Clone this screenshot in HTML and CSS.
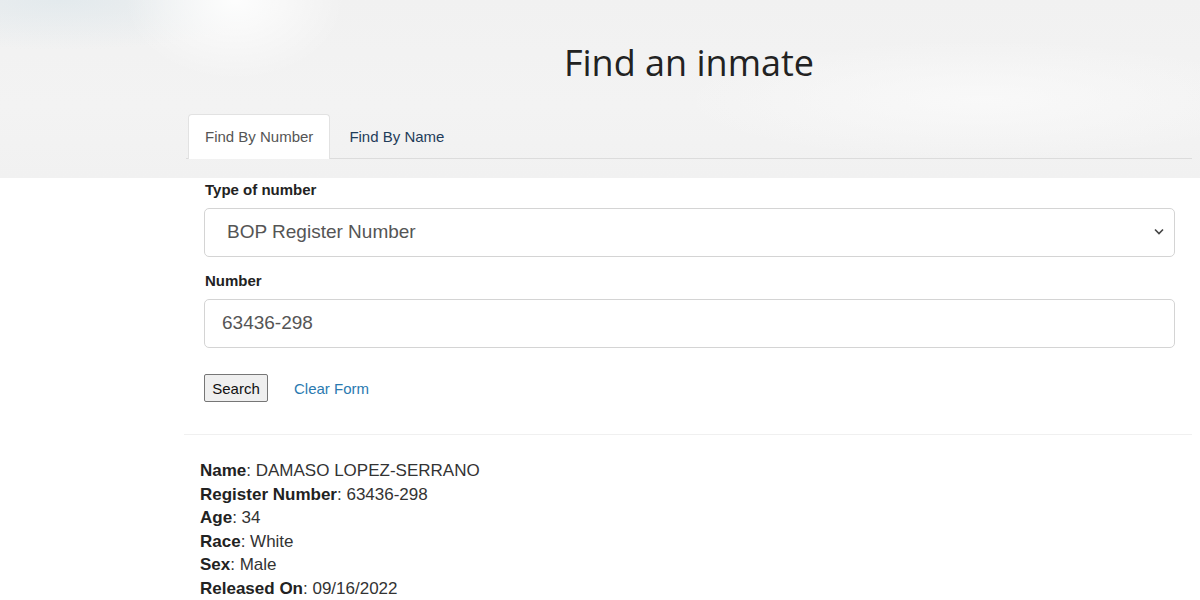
FILE: index.html
```html
<!DOCTYPE html>
<html lang="en">
<head>
<meta charset="utf-8">
<title>Find an inmate</title>
<link rel="stylesheet" href="styles.css">
</head>
<body>
<header class="hero">
  <div class="container">
    <h1 class="title">Find an inmate</h1>
    <ul class="tabs">
      <li class="tab active">Find By Number</li>
      <li class="tab">Find By Name</li>
    </ul>
  </div>
</header>
<main class="container">
  <form class="search-form">
    <label class="field-label">Type of number</label>
    <div class="select">
      <span>BOP Register Number</span>
      <svg class="chevron" width="10" height="7" viewBox="0 0 10 7"><path d="M1 1.5l4 4 4-4" fill="none" stroke="#444" stroke-width="1.6"/></svg>
    </div>
    <label class="field-label">Number</label>
    <div class="input">63436-298</div>
    <div class="actions">
      <button type="button" class="btn">Search</button>
      <a class="link" href="#">Clear Form</a>
    </div>
  </form>
  <div class="divider"></div>
  <div class="result">
    <div><b>Name</b>: DAMASO LOPEZ-SERRANO</div>
    <div><b>Register Number</b>: 63436-298</div>
    <div><b>Age</b>: 34</div>
    <div><b>Race</b>: White</div>
    <div><b>Sex</b>: Male</div>
    <div><b>Released On</b>: 09/16/2022</div>
  </div>
</main>
</body>
</html>
```
FILE: styles.css
```css
* { box-sizing: border-box; }
html, body { margin: 0; padding: 0; }
body {
  font-family: "Liberation Sans", Arial, sans-serif;
  color: #333;
  background: #fff;
  width: 1200px;
  height: 600px;
  overflow: hidden;
}
.hero {
  height: 178px;
  background:
    radial-gradient(ellipse 110px 80px at 235px 0px, rgba(255,255,255,0.9), rgba(255,255,255,0) 100%),
    radial-gradient(ellipse 220px 50px at 60px 0px, rgba(210,225,232,0.45), rgba(210,225,232,0) 100%),
    radial-gradient(ellipse 300px 60px at 980px 100px, rgba(250,250,250,0.8), rgba(250,250,250,0) 100%),
    linear-gradient(180deg, #f1f1f1 0%, #f3f3f3 60%, #f1f1f1 100%);
}
.container {
  margin-left: 186px;
  width: 1006px;
}
.title {
  margin: 0;
  padding-top: 40px;
  height: 114px;
  text-align: center;
  font-family: "Open Sans", sans-serif;
  font-weight: 400;
  font-size: 36px;
  line-height: 46px;
  color: #222;
}
.tabs {
  list-style: none;
  margin: 0;
  padding: 0 0 0 2px;
  display: flex;
  border-bottom: 1px solid #dcdcdc;
  height: 45px;
}
.tab {
  height: 45px;
  padding: 0 16px;
  margin-right: 2px;
  font-size: 15px;
  line-height: 44px;
  color: #1f3d5a;
  border: 1px solid transparent;
  border-bottom: none;
  border-radius: 4px 4px 0 0;
}
.tab.active {
  background: #fff;
  color: #555;
  border-color: #e2e2e2;
}
.search-form {
  padding: 3px 17px 0 18px;
}
.field-label {
  display: block;
  font-weight: bold;
  font-size: 15px;
  line-height: 17px;
  color: #222;
  margin-bottom: 10px;
  margin-left: 1px;
}
.select, .input {
  display: flex;
  align-items: center;
  height: 49px;
  border: 1px solid #d4d4d4;
  border-radius: 5px;
  font-size: 19px;
  color: #555;
  background: #fff;
}
.select {
  justify-content: space-between;
  padding: 0 10px 2px 22px;
  margin-bottom: 15px;
}
.input {
  padding: 0 17px 2px;
  margin-bottom: 26px;
}
.actions {
  display: flex;
  align-items: center;
  gap: 26px;
}
.btn {
  font-family: "Liberation Sans", Arial, sans-serif;
  font-size: 15px;
  height: 28px;
  width: 64px;
  padding: 0;
  color: #111;
  background: #efefef;
  border: 1px solid #767676;
  border-radius: 2px;
}
.link {
  font-size: 15px;
  color: #2a7ab0;
  text-decoration: none;
}
.divider {
  margin-top: 32px;
  height: 1px;
  background: #f0f0f0;
  margin-left: -2px;
}
.result {
  padding: 24px 0 0 14px;
  font-size: 17px;
  line-height: 23.6px;
  color: #333;
}
.result b { color: #222; }
```
